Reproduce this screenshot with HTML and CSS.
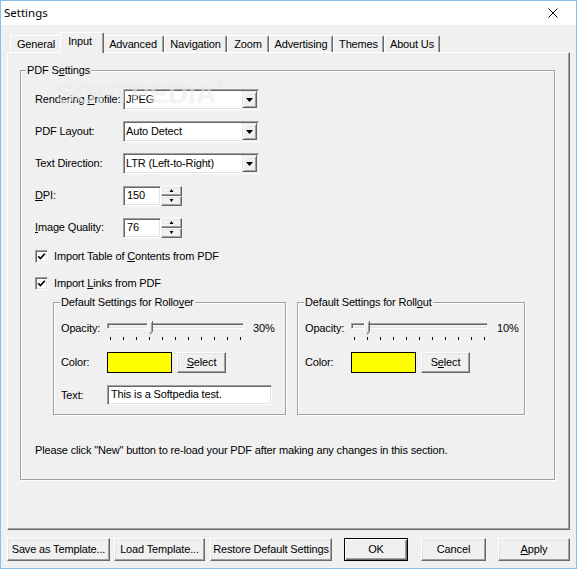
FILE: index.html
```html
<!DOCTYPE html>
<html>
<head>
<meta charset="utf-8">
<title>Settings</title>
<link rel="stylesheet" href="styles.css">
</head>
<body>
<div class="window">
  <div class="titlebar">
    <span class="title">Settings</span>
    <svg class="close" width="10" height="10" viewBox="0 0 10 10"><path d="M0.5 0.5L9.5 9.5M9.5 0.5L0.5 9.5" stroke="#000" stroke-width="1" fill="none"/></svg>
  </div>
  <div class="client">
    <div class="tabs">
      <div class="tab w-general">General</div>
      <div class="tab selected">Input</div>
      <div class="tab w-advanced">Advanced</div>
      <div class="tab w-navigation">Navigation</div>
      <div class="tab w-zoom">Zoom</div>
      <div class="tab w-advertising">Advertising</div>
      <div class="tab w-themes">Themes</div>
      <div class="tab w-about">About Us</div>
    </div>
    <div class="panel">
      <div class="group pdf">
        <div class="legend legend-pdf">PDF S<u>e</u>ttings</div>

        <div class="row first">
          <span class="lbl">Rendering <u>P</u>rofile:</span>
          <div class="combo sunken"><span class="val">JPEG</span><span class="dd raised"><svg width="7" height="4" viewBox="0 0 7 4"><polygon points="0,0 7,0 3.5,4" fill="#000"/></svg></span></div>
        </div>
        <div class="row">
          <span class="lbl">PDF Layout:</span>
          <div class="combo sunken"><span class="val">Auto Detect</span><span class="dd raised"><svg width="7" height="4" viewBox="0 0 7 4"><polygon points="0,0 7,0 3.5,4" fill="#000"/></svg></span></div>
        </div>
        <div class="row">
          <span class="lbl">Text Direction:</span>
          <div class="combo sunken"><span class="val">LTR (Left-to-Right)</span><span class="dd raised"><svg width="7" height="4" viewBox="0 0 7 4"><polygon points="0,0 7,0 3.5,4" fill="#000"/></svg></span></div>
        </div>
        <div class="row">
          <span class="lbl"><u>D</u>PI:</span>
          <div class="spin">
            <span class="spin-field sunken">150</span>
            <span class="spin-btns">
              <span class="spin-btn raised"><svg width="5" height="3" viewBox="0 0 5 3"><polygon points="2.5,0 4.5,3 0.5,3" fill="#000"/></svg></span>
              <span class="spin-btn raised"><svg width="5" height="3" viewBox="0 0 5 3"><polygon points="0.5,0 4.5,0 2.5,3" fill="#000"/></svg></span>
            </span>
          </div>
        </div>
        <div class="row">
          <span class="lbl"><u>I</u>mage Quality:</span>
          <div class="spin">
            <span class="spin-field sunken">76</span>
            <span class="spin-btns">
              <span class="spin-btn raised"><svg width="5" height="3" viewBox="0 0 5 3"><polygon points="2.5,0 4.5,3 0.5,3" fill="#000"/></svg></span>
              <span class="spin-btn raised"><svg width="5" height="3" viewBox="0 0 5 3"><polygon points="0.5,0 4.5,0 2.5,3" fill="#000"/></svg></span>
            </span>
          </div>
        </div>

        <div class="check-row first-check">
          <span class="check sunken"><svg width="9" height="9" viewBox="0 0 9 9"><path d="M1.2 4.2L3.4 6.6L7.8 1.8" stroke="#000" stroke-width="1.7" fill="none"/></svg></span>
          <span>Import Table of <u>C</u>ontents from PDF</span>
        </div>
        <div class="check-row second-check">
          <span class="check sunken"><svg width="9" height="9" viewBox="0 0 9 9"><path d="M1.2 4.2L3.4 6.6L7.8 1.8" stroke="#000" stroke-width="1.7" fill="none"/></svg></span>
          <span>Import <u>L</u>inks from PDF</span>
        </div>

        <div class="subs">
          <div class="group sub rollover">
            <div class="legend legend-sub">Default Settings for Rollo<u>v</u>er</div>
            <div class="opacity-row">
              <span class="olbl">Opacity:</span>
              <div class="slider">
                <div class="track sunken"></div>
                <div class="ticks"><i></i><i></i><i></i><i></i><i></i><i></i><i></i><i></i><i></i><i></i><i></i></div>
                <svg class="thumb thumb-30" width="6" height="14" viewBox="0 0 6 14"><polygon points="0.5,0.5 5.5,0.5 5.5,10.5 3,13.5 0.5,10.5" fill="#f0f0f0"/><polyline points="0.5,10.5 0.5,0.5 5,0.5" stroke="#fff" fill="none"/><polyline points="5.5,0 5.5,10.5 3,13.5" stroke="#696969" fill="none"/><polyline points="4.5,1.5 4.5,10 2.8,12" stroke="#a0a0a0" fill="none"/></svg>
              </div>
              <span class="pct">30%</span>
            </div>
            <div class="color-row">
              <span class="clbl">Color:</span>
              <span class="swatch"></span>
              <span class="btn-sm raised"><u>S</u>elect</span>
            </div>
            <div class="text-row">
              <span class="clbl">Text:</span>
              <span class="tfield sunken">This is a Softpedia test.</span>
            </div>
          </div>
          <div class="group sub rollout">
            <div class="legend legend-sub">Default Settings for Roll<u>o</u>ut</div>
            <div class="opacity-row">
              <span class="olbl">Opacity:</span>
              <div class="slider">
                <div class="track sunken"></div>
                <div class="ticks"><i></i><i></i><i></i><i></i><i></i><i></i><i></i><i></i><i></i><i></i><i></i></div>
                <svg class="thumb thumb-10" width="6" height="14" viewBox="0 0 6 14"><polygon points="0.5,0.5 5.5,0.5 5.5,10.5 3,13.5 0.5,10.5" fill="#f0f0f0"/><polyline points="0.5,10.5 0.5,0.5 5,0.5" stroke="#fff" fill="none"/><polyline points="5.5,0 5.5,10.5 3,13.5" stroke="#696969" fill="none"/><polyline points="4.5,1.5 4.5,10 2.8,12" stroke="#a0a0a0" fill="none"/></svg>
              </div>
              <span class="pct">10%</span>
            </div>
            <div class="color-row">
              <span class="clbl">Color:</span>
              <span class="swatch"></span>
              <span class="btn-sm raised">S<u>e</u>lect</span>
            </div>
          </div>
        </div>

        <p class="note">Please click "New" button to re-load your PDF after making any changes in this section.</p>
      </div>
    </div>
    <div class="buttons">
      <span class="btn raised b-save">Save as Template...</span>
      <span class="btn raised b-load">Load Template...</span>
      <span class="btn raised b-restore">Restore Default Settings</span>
      <span class="btn default b-ok">OK</span>
      <span class="btn raised b-cancel">Cancel</span>
      <span class="btn raised b-apply"><u>A</u>pply</span>
    </div>
  </div>
  <div class="watermark">SOFTPEDIA<span class="reg">®</span></div>
</div>
</body>
</html>
```

FILE: styles.css
```css
* { box-sizing: border-box; }
html, body { margin: 0; padding: 0; }
body {
  font-family: "Liberation Sans", Arial, sans-serif;
  font-size: 11px;
  line-height: 13px;
  letter-spacing: -0.15px;
  color: #000;
  background: #fff;
}
u { text-decoration: underline; text-underline-offset: 1px; }

.window {
  width: 577px;
  height: 569px;
  border: 1px solid #88bfee;
  display: flex;
  flex-direction: column;
  position: relative;
  overflow: hidden;
}

.titlebar {
  flex: none;
  height: 24px;
  background: #fff;
  display: flex;
  align-items: center;
  justify-content: space-between;
  padding: 0 18px 0 3px;
}
.title {
  font-family: "Noto Sans", "Liberation Sans", sans-serif;
  font-size: 11.5px;
  line-height: 16px;
  letter-spacing: 0;
}
.close { display: block; }

.client {
  flex: 1;
  background: #f0f0f0;
}

/* tabs */
.tabs {
  display: flex;
  align-items: flex-end;
  height: 20px;
  margin-top: 7px;
  padding-left: 9px;
}
.tab {
  flex: none;
  height: 17px;
  border-top: 1px solid #fff;
  border-left: 1px solid #fff;
  border-right: 1px solid #696969;
  box-shadow: inset -1px 0 #a0a0a0;
  border-radius: 2px 2px 0 0;
  text-align: center;
  line-height: 16px;
  white-space: nowrap;
}
.tab.selected {
  width: 44px;
  height: 21px;
  margin: 0 -2px -1px;
  position: relative;
  z-index: 1;
  background: #f0f0f0;
  line-height: 17px;
  padding-right: 4px;
}
.w-general { width: 52px; }
.w-advanced { width: 62px; }
.w-navigation { width: 63px; }
.w-zoom { width: 42px; }
.w-advertising { width: 64px; }
.w-themes { width: 51px; }
.w-about { width: 56px; }

/* panel */
.panel {
  margin-left: 6px;
  width: 563px;
  height: 478px;
  border: 1px solid;
  border-color: #fff #696969 #696969 #fff;
  box-shadow: inset -1px -1px #a0a0a0;
  padding: 17px 0 0 12px;
}

.group {
  border: 1px solid #a0a0a0;
  box-shadow: inset 1px 1px #fff, 1px 1px #fff;
}
.legend {
  display: table;
  margin-top: -7px;
  padding: 0 1px;
  background: #f0f0f0;
  line-height: 13px;
  white-space: nowrap;
}
.legend-pdf { margin-left: -9px; }
.legend-sub { margin-left: -1px; }

.pdf {
  width: 535px;
  height: 410px;
  padding-left: 14px;
}

/* 3D borders */
.sunken {
  border: 1px solid;
  border-color: #a0a0a0 #fff #fff #a0a0a0;
  box-shadow: inset 1px 1px #696969, inset -1px -1px #e3e3e3;
  background: #fff;
}
.raised {
  border: 1px solid;
  border-color: #fff #696969 #696969 #fff;
  box-shadow: inset -1px -1px #a0a0a0, inset 1px 1px #e3e3e3;
  background: #f0f0f0;
}

/* form rows */
.row {
  display: flex;
  align-items: center;
  height: 21px;
  margin-top: 11px;
}
.row.first { margin-top: 12px; }
.lbl { width: 88px; flex: none; white-space: nowrap; }

.combo {
  width: 136px;
  height: 21px;
  display: flex;
  padding: 1px;
}
.combo .val {
  flex: 1;
  padding-left: 1px;
  line-height: 17px;
  white-space: nowrap;
}
.dd {
  width: 15px;
  height: 17px;
  display: flex;
  align-items: center;
  justify-content: center;
  border-color: #e3e3e3 #696969 #696969 #e3e3e3;
  box-shadow: inset 1px 1px #fff, inset -1px -1px #a0a0a0;
}
.dd svg { display: block; }

.spin {
  display: flex;
  height: 20px;
}
.spin-field {
  width: 38px;
  height: 20px;
  padding-left: 3px;
  line-height: 17px;
}
.spin-btns {
  width: 21px;
  display: flex;
  flex-direction: column;
}
.spin-btn {
  flex: 1;
  display: flex;
  align-items: center;
  justify-content: center;
}
.spin-btn svg { display: block; }

.check-row {
  display: flex;
  align-items: center;
  height: 13px;
}
.first-check { margin-top: 12px; }
.second-check { margin-top: 14px; }
.check {
  width: 13px;
  height: 13px;
  flex: none;
  margin-right: 6px;
  display: flex;
  align-items: center;
  justify-content: center;
}
.check svg { display: block; }

/* sub groups */
.subs {
  display: flex;
  gap: 11px;
  margin: 12px 0 0 18px;
  height: 113px;
}
.sub { padding-left: 7px; }
.rollover { width: 233px; }
.rollout { width: 228px; }

.opacity-row {
  display: flex;
  align-items: flex-start;
  margin-top: 12px;
  height: 20px;
}
.olbl, .clbl { width: 46px; flex: none; }
.olbl { margin-top: 1px; }
.slider {
  width: 137px;
  height: 20px;
  position: relative;
  flex: none;
}
.track {
  margin-top: 2px;
  height: 6px;
  background: #f0f0f0;
}
.ticks {
  display: flex;
  justify-content: space-between;
  margin: 8px 3px 0;
  height: 3px;
}
.ticks i {
  display: block;
  width: 1px;
  height: 3px;
  background: #000;
}
.thumb {
  position: absolute;
  top: 0;
  display: block;
}
.thumb-30 { left: 40px; }
.thumb-10 { left: 13px; }
.pct { margin-left: 9px; margin-top: 1px; }

.color-row {
  display: flex;
  align-items: center;
  margin-top: 11px;
  height: 21px;
}
.swatch {
  width: 65px;
  height: 21px;
  background: #ffff00;
  border: 1px solid #000;
}
.btn-sm {
  width: 49px;
  height: 21px;
  margin-left: 5px;
  text-align: center;
  line-height: 18px;
}
.text-row {
  display: flex;
  align-items: center;
  margin-top: 12px;
  height: 20px;
}
.tfield {
  width: 165px;
  height: 20px;
  padding-left: 3px;
  line-height: 17px;
  white-space: nowrap;
}

.note {
  margin: 29px 0 0;
  line-height: 13px;
  white-space: nowrap;
}

/* bottom buttons */
.buttons {
  display: flex;
  margin-top: 8px;
  padding-left: 6px;
  height: 23px;
}
.btn {
  height: 23px;
  text-align: center;
  line-height: 20px;
  white-space: nowrap;
  flex: none;
}
.btn.default {
  border: 1px solid #000;
  box-shadow: inset 1px 1px #fff, inset -1px -1px #696969, inset -2px -2px #a0a0a0;
  background: #f0f0f0;
}
.b-save { width: 103px; }
.b-load { width: 91px; margin-left: 4px; }
.b-restore { width: 122px; margin-left: 5px; }
.b-ok { width: 64px; margin-left: 12px; }
.b-cancel { width: 65px; margin-left: 13px; }
.b-apply { width: 72px; margin-left: 12px; }

/* watermark overlay */
.watermark {
  position: absolute;
  left: 55px;
  top: 78px;
  font-family: "Liberation Sans", Arial, sans-serif;
  font-weight: bold;
  font-size: 28px;
  line-height: 30px;
  letter-spacing: 0;
  color: rgba(255, 255, 255, 0.55);
  text-shadow: 0 0 1px rgba(0, 0, 0, 0.10);
  pointer-events: none;
  white-space: nowrap;
}
.watermark .reg {
  font-size: 9px;
  vertical-align: top;
  line-height: 12px;
}
```
